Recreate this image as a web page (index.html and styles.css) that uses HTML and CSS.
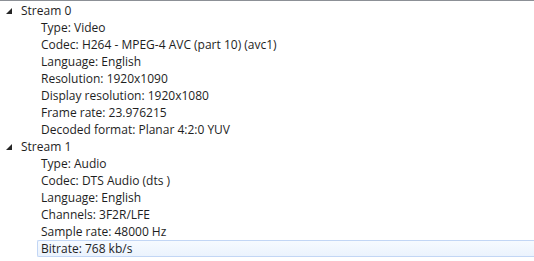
FILE: index.html
```html
<!DOCTYPE html>
<html lang="en">

<head>
  <meta charset="UTF-8">
  <title>Codec</title>
  <link rel="stylesheet" href="styles.css">
</head>

<body>

  <div class="tree">

    <!-- Stream 0 -->
    <div class="node">
      <span class="arrow"></span>
      <span class="label">Stream 0</span>
    </div>
    <ul class="children">
      <li>Type: Video</li>
      <li>Codec: H264 - MPEG-4 AVC (part 10) (avc1)</li>
      <li>Language: English</li>
      <li>Resolution: 1920x1090</li>
      <li>Display resolution: 1920x1080</li>
      <li>Frame rate: 23.976215</li>
      <li>Decoded format: Planar 4:2:0 YUV</li>
    </ul>

    <!-- Stream 1 -->
    <div class="node">
      <span class="arrow"></span>
      <span class="label">Stream 1</span>
    </div>
    <ul class="children">
      <li>Type: Audio</li>
      <li>Codec: DTS Audio (dts )</li>
      <li>Language: English</li>
      <li>Channels: 3F2R/LFE</li>
      <li>Sample rate: 48000 Hz</li>
      <li class="selected">Bitrate: 768 kb/s</li>
    </ul>

  </div>

</body>

</html>
```

FILE: styles.css
```css
* {
  margin: 0;
  padding: 0;
  box-sizing: border-box;
}

body {
  background-color: #fff;
  font-family: "Open Sans", "Noto Sans", sans-serif;
  font-size: 12px;
  color: #1e1e1e;
  overflow: hidden;
}

/* 树的外框 */
.tree {
  border-top: 1px solid #8c9096;
  padding-top: 1px;
  width: 534px;
  height: 261px;
}

.node {
  display: flex;
  align-items: center;
  height: 17px;
}

.arrow {
  width: 0;
  height: 0;
  margin-left: 6px;
  margin-top: 1px;
  border-left: 6px solid transparent;
  border-bottom: 6px solid #262626;
}

.label {
  margin-left: 9px;
  line-height: 17px;
}

.children {
  list-style: none;
}

.children li {
  height: 17px;
  line-height: 15px;
  margin-left: 37px;
  padding-left: 3px;
  border: 1px solid transparent;
  white-space: nowrap;
}

/* 选中的那一行 */
.children li.selected {
  border-color: #c2d6f5;
  border-right: none;
  border-radius: 2px 0 0 2px;
  background: linear-gradient(#f6faff, #ebf3fd);
}
```
